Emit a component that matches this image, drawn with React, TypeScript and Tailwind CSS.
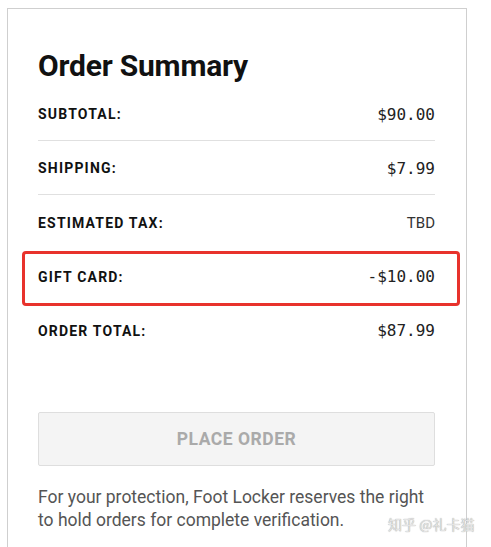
const ROWS: { label: string; value: string; mono: boolean; divider: boolean; highlight?: boolean }[] = [
  { label: "Subtotal:", value: "$90.00", mono: true, divider: true },
  { label: "Shipping:", value: "$7.99", mono: true, divider: true },
  { label: "Estimated Tax:", value: "TBD", mono: false, divider: false },
  { label: "Gift Card:", value: "-$10.00", mono: true, divider: false, highlight: true },
  { label: "Order Total:", value: "$87.99", mono: true, divider: false },
];

export default function App() {
  return (
    <div className="relative w-[491px] h-[547px] overflow-hidden bg-white font-['Roboto',sans-serif]">
      <div className="ml-[7px] mt-[8px] w-[460px] h-[560px] border border-[#cfcfcf] pl-[30px] pr-[31px] pt-[39px]">
        <h1 className="text-[30px] leading-[36px] font-bold text-[#111] tracking-[-0.2px]">Order Summary</h1>

        <div className="mt-[3px]">
          {ROWS.map((row) => (
            <div
              key={row.label}
              className={`relative flex h-[54px] items-center justify-between pt-[2px] ${row.divider ? "border-b border-[#e0e0e0]" : ""}`}
            >
              {row.highlight && (
                <div className="absolute left-[-16px] right-[-25px] top-[2px] bottom-[-3px] rounded-[4px] border-[3px] border-[#e8322c]" />
              )}
              <span className="text-[14px] font-bold uppercase tracking-[0.085em] text-[#111]">{row.label}</span>
              {row.mono ? (
                <span className="font-['DejaVu_Sans_Mono',monospace] text-[16px] text-[#222]">{row.value}</span>
              ) : (
                <span className="text-[15px] text-[#333]">{row.value}</span>
              )}
            </div>
          ))}
        </div>

        <button className="mt-[55px] flex h-[54px] w-full items-center justify-center rounded-[2px] border border-[#dedede] bg-[#f4f4f4] text-[17.5px] font-bold tracking-[0.03em] text-[#aaaaaa]">
          PLACE ORDER
        </button>

        <p className="mt-[20px] w-[392px] text-[17.5px] leading-[23px] text-[#555]">
          For your protection, Foot Locker reserves the right to hold orders for complete verification.
        </p>
      </div>

      <div className="absolute left-[388px] top-[514px] text-[14px] text-[#e4e4e4] font-['Noto_Sans_CJK_SC',sans-serif] [text-shadow:0_0_1px_#888]">
        知乎 @礼卡猫
      </div>
    </div>
  );
}
